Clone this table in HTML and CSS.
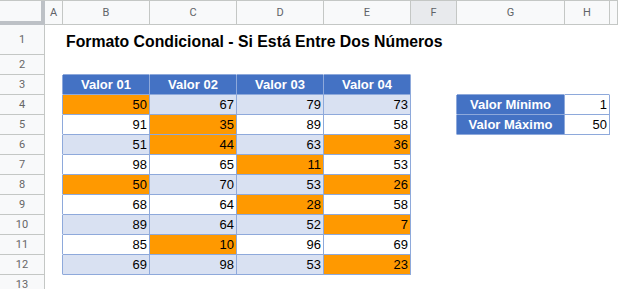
FILE: index.html
```html
<!DOCTYPE html>
<html lang="es">
<head>
<meta charset="utf-8">
<title>Formato Condicional</title>
<link rel="stylesheet" href="styles.css">
</head>
<body>
<div class="sheet">
  <div class="row hdr">
    <div class="corner"></div>
    <div class="ch">A</div><div class="ch">B</div><div class="ch">C</div><div class="ch">D</div><div class="ch">E</div><div class="ch sel">F</div><div class="ch">G</div><div class="ch">H</div><div class="ch"></div>
  </div>
  <div class="row r1">
    <div class="rh">1</div><div class="c"></div><div class="c title">Formato Condicional - Si Está Entre Dos Números</div><div class="c"></div><div class="c"></div><div class="c"></div><div class="c"></div><div class="c"></div><div class="c"></div><div class="c"></div>
  </div>
  <div class="row">
    <div class="rh">2</div><div class="c"></div><div class="c tt"></div><div class="c tt"></div><div class="c tt"></div><div class="c tt"></div><div class="c"></div><div class="c"></div><div class="c"></div><div class="c"></div>
  </div>
  <div class="row">
    <div class="rh">3</div><div class="c tl"></div><div class="c t th">Valor 01</div><div class="c t th">Valor 02</div><div class="c t th">Valor 03</div><div class="c t th">Valor 04</div><div class="c"></div><div class="c tt"></div><div class="c tt"></div><div class="c"></div>
  </div>
  <div class="row">
    <div class="rh">4</div><div class="c tl"></div><div class="c t td hi">50</div><div class="c t td band">67</div><div class="c t td band">79</div><div class="c t td band">73</div><div class="c tl"></div><div class="c t th">Valor Mínimo</div><div class="c t td">1</div><div class="c"></div>
  </div>
  <div class="row">
    <div class="rh">5</div><div class="c tl"></div><div class="c t td">91</div><div class="c t td hi">35</div><div class="c t td">89</div><div class="c t td">58</div><div class="c tl"></div><div class="c t th">Valor Máximo</div><div class="c t td">50</div><div class="c"></div>
  </div>
  <div class="row">
    <div class="rh">6</div><div class="c tl"></div><div class="c t td band">51</div><div class="c t td hi">44</div><div class="c t td band">63</div><div class="c t td hi">36</div><div class="c"></div><div class="c"></div><div class="c"></div><div class="c"></div>
  </div>
  <div class="row">
    <div class="rh">7</div><div class="c tl"></div><div class="c t td">98</div><div class="c t td">65</div><div class="c t td hi">11</div><div class="c t td">53</div><div class="c"></div><div class="c"></div><div class="c"></div><div class="c"></div>
  </div>
  <div class="row">
    <div class="rh">8</div><div class="c tl"></div><div class="c t td hi">50</div><div class="c t td band">70</div><div class="c t td band">53</div><div class="c t td hi">26</div><div class="c"></div><div class="c"></div><div class="c"></div><div class="c"></div>
  </div>
  <div class="row">
    <div class="rh">9</div><div class="c tl"></div><div class="c t td">68</div><div class="c t td">64</div><div class="c t td hi">28</div><div class="c t td">58</div><div class="c"></div><div class="c"></div><div class="c"></div><div class="c"></div>
  </div>
  <div class="row">
    <div class="rh">10</div><div class="c tl"></div><div class="c t td band">89</div><div class="c t td band">64</div><div class="c t td band">52</div><div class="c t td hi">7</div><div class="c"></div><div class="c"></div><div class="c"></div><div class="c"></div>
  </div>
  <div class="row">
    <div class="rh">11</div><div class="c tl"></div><div class="c t td">85</div><div class="c t td hi">10</div><div class="c t td">96</div><div class="c t td">69</div><div class="c"></div><div class="c"></div><div class="c"></div><div class="c"></div>
  </div>
  <div class="row">
    <div class="rh">12</div><div class="c tl"></div><div class="c t td band">69</div><div class="c t td band">98</div><div class="c t td band">53</div><div class="c t td hi">23</div><div class="c"></div><div class="c"></div><div class="c"></div><div class="c"></div>
  </div>
  <div class="row">
    <div class="rh">13</div><div class="c"></div><div class="c"></div><div class="c"></div><div class="c"></div><div class="c"></div><div class="c"></div><div class="c"></div><div class="c"></div><div class="c"></div>
  </div>
</div>
</body>
</html>
```

FILE: styles.css
```css
* { box-sizing: border-box; }
html, body { margin: 0; padding: 0; background: #fff; }
body {
  width: 618px;
  height: 289px;
  overflow: hidden;
  font-family: "Liberation Sans", Arial, sans-serif;
}
.sheet { width: 618px; }
.row {
  display: grid;
  grid-template-columns: 45px 18px 87px 87px 87px 87px 46px 108px 45px 1fr;
  height: 20px;
}
.row > div {
  border-right: 1px solid transparent;
  border-bottom: 1px solid transparent;
  white-space: nowrap;
  font-size: 13px;
  line-height: 19px;
  color: #000;
}
.hdr {
  height: 25px;
  border-top: 1px solid #c4c7c5;
}
.hdr > div {
  background: #f8f9fa;
  border-right-color: #c4c7c5;
  border-bottom-color: #c4c7c5;
  font-family: Roboto, "Liberation Sans", sans-serif;
  font-size: 11px;
  line-height: 23px;
  color: #5f6368;
  text-align: center;
}
.hdr > .corner {
  border-right: 4px solid #bdc1c6;
  border-bottom: 4px solid #bdc1c6;
}
.hdr > .sel { background: #e8eaed; }
.row > .rh {
  background: #f8f9fa;
  border-right-color: #c4c7c5;
  border-bottom-color: #c4c7c5;
  font-family: Roboto, "Liberation Sans", sans-serif;
  font-size: 11px;
  color: #666;
  text-align: center;
}
.r1 { height: 30px; }
.r1 > .rh { line-height: 29px; }
.row > .title {
  font-size: 15.8px;
  font-weight: bold;
  line-height: 25px;
  padding: 4px 0 0 3px;
  color: #000;
}
.row > .t {
  border-right-color: #8ea9db;
  border-bottom-color: #8ea9db;
}
.row > .tl { border-right-color: #8ea9db; }
.row > .tt { border-bottom-color: #8ea9db; }
.row > .th {
  background: #4472c4;
  color: #fff;
  font-weight: bold;
  text-align: center;
}
.row > .td {
  text-align: right;
  padding-right: 2px;
}
.row > .band { background: #d9e1f2; }
.row > .hi { background: #ff9900; }
```
